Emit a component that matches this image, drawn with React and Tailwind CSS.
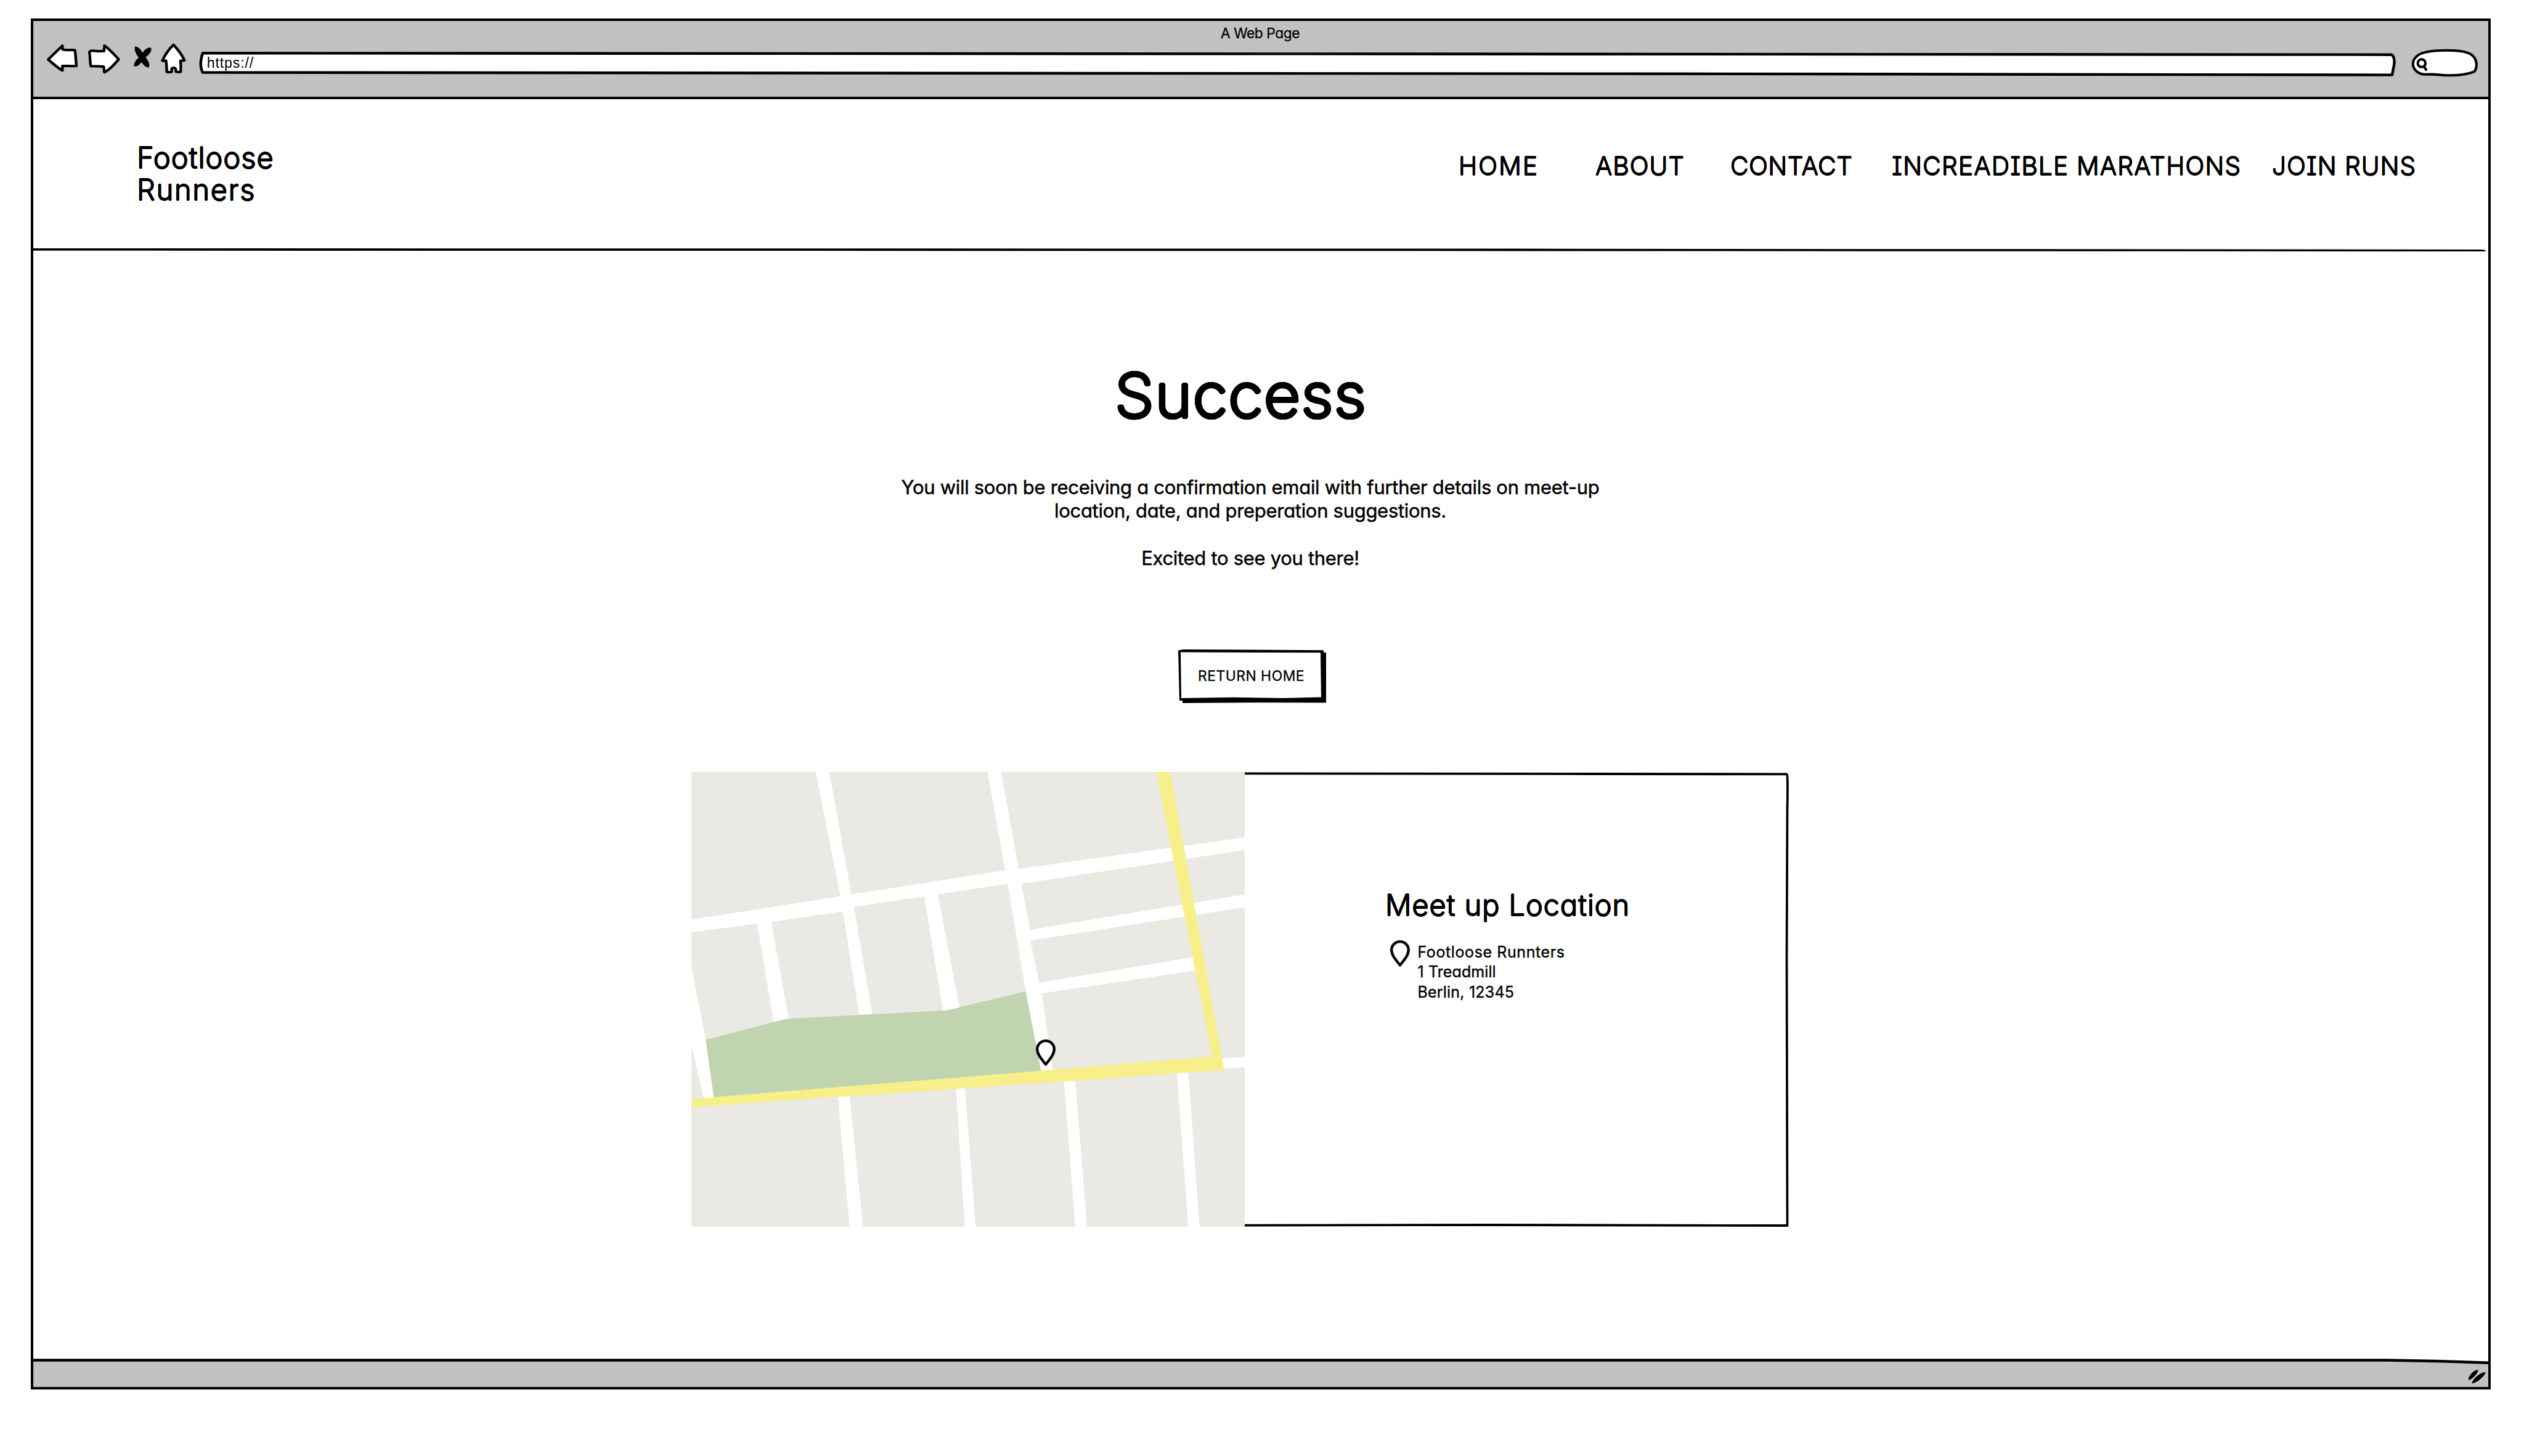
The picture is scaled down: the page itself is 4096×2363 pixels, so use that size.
function Pin({ className }) {
  return (
    <svg viewBox="0 0 32 43" className={className} fill="#fff" stroke="#000" strokeWidth="4.3" strokeLinejoin="round">
      <path d="M16 2.2C8.4 2.2 2.2 8.2 2.2 15.8C2.2 25 10.5 33 16 40.6C21.5 33 29.8 25 29.8 15.8C29.8 8.2 23.6 2.2 16 2.2Z" />
    </svg>
  );
}

const SKETCH = { fill: "#fff", stroke: "#000", strokeWidth: 13.5, strokeLinejoin: "round", strokeLinecap: "round" };

function BrowserIcons() {
  return (
    <>
      <svg viewBox="120 170 170 175" preserveAspectRatio="none" className="ml-[20.4px] h-[52.4px] w-[54.5px] shrink-0" {...SKETCH}>
        <path d="M133 262L205 187L206 208C225 213 248 209 268 211C273 240 273 270 276 297C255 300 228 295 205 297L205 322C178 305 157 285 133 262Z" />
      </svg>
      <svg viewBox="325 170 180 175" preserveAspectRatio="none" className="ml-[11.2px] h-[52.4px] w-[57.7px] shrink-0" {...SKETCH}>
        <path d="M341 222C345 213 354 213 365 215C382 218 400 217 415 217L417 187C445 208 466 234 489 261C467 290 445 315 417 332L413 300C390 297 368 299 348 298C343 273 345 248 341 222Z" />
      </svg>
      <svg viewBox="555 170 110 175" preserveAspectRatio="none" className="ml-[16px] h-[52.4px] w-[35.3px] shrink-0">
        <path d="M571 192C585 190 601 208 609 226C620 207 636 193 652 199C658 215 642 238 624 250C636 266 648 286 642 304C627 309 613 291 604 276C594 291 580 303 567 299C562 283 577 263 590 251C577 237 565 212 571 192Z" />
      </svg>
      <svg viewBox="697 170 140 175" preserveAspectRatio="none" className="ml-[10.3px] h-[52.4px] w-[44.9px] shrink-0" {...SKETCH}>
        <path d="M767 182C790 208 810 236 823 267C817 270 808 268 802 269C807 290 803 312 804 329C796 331 788 330 780 329L778 312C773 305 762 305 758 312L758 329C750 331 742 331 734 330C731 310 734 290 729 268C722 270 715 270 711 268C724 236 745 206 767 182Z" />
      </svg>
    </>
  );
}

function AddressBar() {
  return (
    <div className="relative mt-[14.7px] ml-[18.6px] h-[41px] w-[3565px] shrink-0">
      <svg viewBox="0 0 3565 41" className="absolute inset-0 h-full w-full" fill="#fff" stroke="#000" strokeWidth="4.4" strokeLinejoin="round">
        <path d="M6 2.3L1800 3.4L3558 4.7C3564 8 3563 20 3561 27L3559 37.6L2400 35.8L6 33.6C2 26 2 14 6 2.3Z" />
      </svg>
      <span className="relative block pl-[13px] font-['Liberation_Sans',sans-serif] text-[23px] leading-[37px] tracking-[0.9px]">https://</span>
    </div>
  );
}

function SearchPill() {
  return (
    <svg viewBox="318 201 375 162" className="mt-[9.3px] ml-[23.3px] h-[48.5px] w-[112.2px] shrink-0" {...SKETCH}>
      <path d="M403 344C365 345 334 318 334 287C334 255 362 233 400 224C450 212 580 207 634 228C665 238 682 270 678 300C676 318 672 327 662 331C600 352 540 352 480 346C450 343 425 343 403 344Z" />
      <circle cx="381" cy="283" r="21" />
      <path d="M394 301L405 318" />
    </svg>
  );
}

const MAP_STREETS = [
  "369,29 406,29 466,432 473,473 523,828 487,830 443,488 436,438",
  "837,29 874,29 922,348 929,397 953,549 954,584 978,723 985,758 1015,1012 983,1014 941,751 892,397 885,353",
  "30,515 436,438 466,432 885,353 922,348 1538,244 1538,286 929,397 892,397 701,432 664,439 473,473 443,488 247,523 209,529 30,557",
  "209,525 247,520 296,845 254,852",
  "664,435 701,428 761,806 716,816",
  "953,549 1538,432 1538,474 954,584",
  "977,723 1396,639 1434,676 1402,683 985,758",
  "30,670 69,911 91,1101 63,1103 30,926",
  "1470,973 1538,967 1538,1001 1470,1007",
  "429,1095 461,1093 498,1529 461,1529",
  "751,1068 775,1066 805,1529 775,1529",
  "1045,1043 1076,1040 1108,1529 1076,1529",
  "1353,1016 1384,1013 1415,1529 1384,1529",
];

function StreetMap() {
  return (
    <div className="relative h-[738px] w-[898px]">
      <svg viewBox="30 29 1508 1498" preserveAspectRatio="none" className="h-full w-full">
        <rect x="30" y="29" width="1508" height="1498" fill="#eae9e3" />
        <g fill="#fff">
          {MAP_STREETS.map((p) => <polygon key={p} points={p} />)}
        </g>
        <polygon fill="#c1d4b0" points="69,911 288,842 727,814 941,751 983,1014 91,1100" />
        <polygon fill="#f7ef8a" points="1297,29 1335,29 1482,1010 1100,1044 300,1110 30,1133 30,1107 91,1100 983,1013 1449,966" />
      </svg>
      <Pin className="absolute top-[434px] left-[559px] h-[43px] w-[32px]" />
    </div>
  );
}

// Thin strokes grown outward in all directions give the letters round marker-pen ends.
const MARKER =
  "font-light [text-shadow:0.013em_0,-0.013em_0,0_0.013em,0_-0.013em,0.009em_0.009em,-0.009em_0.009em,0.009em_-0.009em,-0.009em_-0.009em]";
const MARKER_TITLE =
  "font-extralight [text-shadow:0.03em_0,-0.03em_0,0_0.03em,0_-0.03em,0.021em_0.021em,-0.021em_0.021em,0.021em_-0.021em,-0.021em_-0.021em,0.028em_0.011em,-0.028em_0.011em,0.028em_-0.011em,-0.028em_-0.011em,0.011em_0.028em,-0.011em_0.028em,0.011em_-0.028em,-0.011em_-0.028em]";

function Toolbar() {
  return (
    <div className="h-[127px] border-b-4 border-black bg-[#c1c1c1]">
      <div className="pt-[7px] pr-[2px] text-center text-[22.7px] leading-[26px] tracking-[-0.4px] [-webkit-text-stroke:0.3px_black]">A Web Page</div>
      <div className="mt-[2px] flex items-start">
        <BrowserIcons />
        <AddressBar />
        <SearchPill />
      </div>
    </div>
  );
}

function NavLink({ className, children }) {
  return <a className={`${MARKER} text-[40.6px] leading-[52px] whitespace-nowrap ${className}`}>{children}</a>;
}

function Header() {
  return (
    <header className="h-[246px]">
      <div className="flex h-[240px] justify-between pr-[119px] pl-[168px]">
        <div className={`${MARKER} mt-[69px] text-[47.2px] leading-[52.4px]`}>
          <div className="tracking-[0.9px]">Footloose</div>
          <div className="tracking-[1.6px]">Runners</div>
        </div>
        <nav className="mt-[83px] flex">
          <NavLink className="w-[222px] tracking-[2.2px]">HOME</NavLink>
          <NavLink className="w-[219px] tracking-[1px]">ABOUT</NavLink>
          <NavLink className="w-[262px] tracking-[0.5px]">CONTACT</NavLink>
          <NavLink className="w-[617px] tracking-[1.2px]">INCREADIBLE MARATHONS</NavLink>
          <NavLink className="w-[232px] tracking-[1px]">JOIN RUNS</NavLink>
        </nav>
      </div>
      <svg viewBox="0 0 3984 6" preserveAspectRatio="none" className="relative top-[1px] h-[6px] w-full">
        <path d="M0 1L2400 1.6L3973 3Q3980 3.4 3980 6L3975 6L2400 5.4L0 4.8Z" />
      </svg>
    </header>
  );
}

function Footer() {
  return (
    <footer className="relative flex h-[51px] justify-end pr-[3px]">
      <svg viewBox="0 0 3984 51" preserveAspectRatio="none" className="absolute inset-0 h-full w-full">
        <path fill="#c1c1c1" stroke="#000" strokeWidth="4.3" d="M-4 7.5L3820 7.5Q3900 8.5 3990 12L3990 60L-4 60Z" />
      </svg>
      <svg viewBox="478 160 105 90" className="relative mt-[20px] h-[27px] w-[31.4px]">
        <path d="M484 225C480 208 515 168 536 170C541 183 505 225 484 225Z" />
        <path d="M504 244C500 227 550 180 576 183C580 197 530 243 504 244Z" />
      </svg>
    </footer>
  );
}

export default function App() {
  return (
    <div className="h-[2363px] w-[4096px] overflow-hidden bg-white pt-[30px] pl-[50px] font-['Inter',sans-serif] text-black [font-feature-settings:'cv11','cv08']">
      <div className="flex h-[2225px] w-[3992px] flex-col border-4 border-black">
        <Toolbar />
        <Header />
        <main className="flex grow flex-col items-center">
          <h1 className={`${MARKER_TITLE} mt-[175px] mr-[65px] scale-x-105 text-[97px] leading-[120px] tracking-[1.8px]`}>Success</h1>
          <p className="mt-[69.5px] mr-[34px] text-center text-[31px] leading-[38.55px] tracking-[-0.3px] [-webkit-text-stroke:0.5px_black]">
            You will soon be receiving a confirmation email with further details on meet-up
            <br />
            location, date, and preperation suggestions.
            <br />
            <br />
            Excited to see you there!
          </p>
          <button className="relative mt-[128.5px] mr-[28px] flex h-[87px] w-[240px] justify-center pr-[3px] text-[22.9px] leading-[86px] tracking-[0.5px] [-webkit-text-stroke:0.3px_black]">
            <svg viewBox="0 0 240 87" className="absolute inset-0 h-full w-full">
              <path d="M0 1.5L8 0L236 1.2V5H240V86.5L150 86.2L7 87V83H2Z" />
              <path fill="#fff" d="M4 4.6L231 5.2L232 77.6L170 79L90 77.7L5 79Z" />
            </svg>
            <span className="relative">RETURN HOME</span>
          </button>
          <section className="mt-[112px] mr-[67px] flex">
            <StreetMap />
            <div className="relative h-[738px] w-[883px] pt-[186px] pl-[228px]">
              <svg viewBox="0 0 883 738" className="absolute inset-0 h-full w-full" fill="none" stroke="#000" strokeWidth="3.8" strokeLinejoin="round">
                <path d="M0 2.4L560 3L880 3.4Q881.5 4 880.5 60L879.5 300L880.5 736L400 735L0 735.6" />
              </svg>
              <h2 className={`${MARKER} relative text-[47.2px] leading-[60px] tracking-[0.8px]`}>Meet up Location</h2>
              <div className="relative mt-[27px] flex pl-[7.5px]">
                <Pin className="h-[43px] w-[32px]" />
                <div className="mt-[3px] ml-[13px] text-[25px] leading-[32.3px] [-webkit-text-stroke:0.4px_black]">
                  <div className="tracking-[0.6px]">Footloose Runnters</div>
                  <div className="tracking-[0.1px]">1 Treadmill</div>
                  <div className="tracking-[0.2px]">Berlin, 12345</div>
                </div>
              </div>
            </div>
          </section>
        </main>
        <Footer />
      </div>
    </div>
  );
}
